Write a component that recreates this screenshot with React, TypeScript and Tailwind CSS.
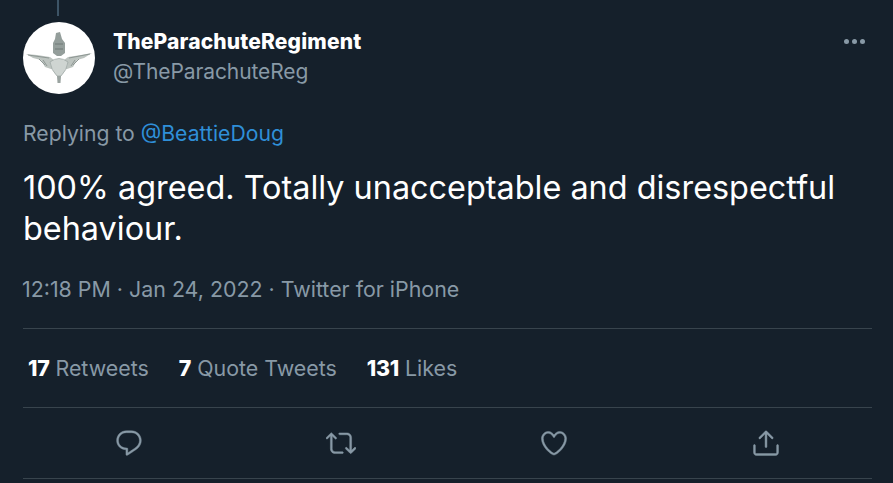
const F = "font-['Inter','Liberation_Sans',sans-serif]";

function Avatar() {
  return (
    <div className="w-[72px] h-[72px] rounded-full bg-white shrink-0 flex items-center justify-center">
      <svg width="72" height="72" viewBox="0 0 72 72" className="blur-[0.5px]">
        <path d="M3 32 L14 33 L27 35 L31 38 L41 38 L45 35 L58 33 L69 31 L61 36 L54 38 L50 45 L44 47 L28 47 L22 45 L18 38 L10 36 Z" fill="#bdc4c0" />
        <path d="M20 38 L24 44 M52 38 L48 44 M16 37 L22 43 M56 37 L50 43" stroke="#8f9895" strokeWidth="1" fill="none" />
        <path d="M27 40 Q36 33 45 40 Q44 48 38 54 L34 54 Q28 48 27 40 Z" fill="#cfd5d2" stroke="#9aa3a0" strokeWidth="0.7" />
        <path d="M34 54 L38 54 L37.5 61 L34.5 61 Z" fill="#9aa3a0" />
        <path d="M32 17 L33 11 L37 10 L39 17 L42 21 L42 31 L38 34 L34 34 L30 31 L30 21 Z" fill="#949e9b" />
        <path d="M32 22 L40 22 M32 27 L40 27" stroke="#6f7976" strokeWidth="1" />
        <path d="M5 33 L26 36 M67 32 L46 36" stroke="#78827f" strokeWidth="0.7" fill="none" />
      </svg>
    </div>
  );
}

function Ic({ children }: { children: React.ReactNode }) {
  return (
    <svg viewBox="0 0 24 24" className="w-[30px] h-[30px]" fill="#8899a6" stroke="#8899a6" strokeWidth="0.35">
      {children}
    </svg>
  );
}

export default function App() {
  return (
    <div className={`${F} w-[893px] h-[483px] bg-[#15202b] overflow-hidden px-[23px] flex flex-col`}>
      <div className="w-[2px] h-[16px] bg-[#3d5466] ml-[34px]" />
      <div className="flex items-start mt-[6px] h-[72px]">
        <Avatar />
        <div className="ml-[18px] flex-1 pt-[5px]">
          <div className="text-[21px] leading-[30px] font-extrabold text-white tracking-[0.15px]">TheParachuteRegiment</div>
          <div className="text-[21px] leading-[30px] text-[#8899a6] tracking-[-0.1px]">@TheParachuteReg</div>
        </div>
        <div className="flex gap-[3px] mt-[17px] mr-[5px]">
          <span className="w-[5px] h-[5px] rounded-full bg-[#8899a6]" />
          <span className="w-[5px] h-[5px] rounded-full bg-[#8899a6]" />
          <span className="w-[5px] h-[5px] rounded-full bg-[#8899a6]" />
        </div>
      </div>
      <div className="mt-[24px] text-[21.2px] leading-[30px] text-[#8899a6]">
        Replying to <span className="text-[#2f8fd8]">@BeattieDoug</span>
      </div>
      <div className="mt-[19px] text-[32.4px] leading-[41px] text-white w-[840px]">
        100% agreed. Totally unacceptable and disrespectful behaviour.
      </div>
      <div className="mt-[25px] -ml-[1px] text-[21.4px] leading-[30px] text-[#8899a6]">12:18 PM · Jan 24, 2022 · Twitter for iPhone</div>
      <div className="mt-[24px] border-t border-[#38444d] w-[849px] h-[79px] flex items-center pl-[5px] text-[21.4px] text-[#8899a6] gap-[30px]">
        <span><b className="text-white font-extrabold tracking-[-0.3px]">17</b> Retweets</span>
        <span><b className="text-white font-extrabold tracking-[-0.3px]">7</b> Quote Tweets</span>
        <span><b className="text-white font-extrabold tracking-[-0.3px]">131</b> Likes</span>
      </div>
      <div className="border-t border-b border-[#38444d] w-[849px] h-[72px] grid grid-cols-4 items-center">
        <div className="flex justify-center"><Ic><path d="M14.046 2.242l-4.148-.01h-.002c-4.374 0-7.8 3.427-7.8 7.802 0 4.098 3.186 7.206 7.465 7.37v3.828c0 .108.044.286.12.403.142.225.384.347.632.347.138 0 .277-.038.402-.118.264-.168 6.473-4.14 8.088-5.506 1.902-1.61 3.04-3.97 3.043-6.312v-.017c-.006-4.367-3.43-7.787-7.8-7.788zm3.787 12.972c-1.134.96-4.862 3.405-6.772 4.643V16.67c0-.414-.335-.75-.75-.75h-.396c-3.66 0-6.318-2.476-6.318-5.886 0-3.534 2.768-6.302 6.3-6.302l4.147.01h.002c3.532 0 6.3 2.766 6.302 6.296-.003 1.91-.942 3.844-2.514 5.176z" /></Ic></div>
        <div className="flex justify-center"><Ic><path d="M23.77 15.67c-.292-.293-.767-.293-1.06 0l-2.22 2.22V7.65c0-2.068-1.683-3.75-3.75-3.75h-5.85c-.414 0-.75.336-.75.75s.336.75.75.75h5.85c1.24 0 2.25 1.01 2.25 2.25v10.24l-2.22-2.22c-.293-.293-.768-.293-1.06 0s-.294.768 0 1.06l3.5 3.5c.145.147.337.22.53.22s.383-.072.53-.22l3.5-3.5c.294-.292.294-.767 0-1.06zm-10.66 3.28H7.26c-1.24 0-2.25-1.01-2.25-2.25V6.46l2.22 2.22c.148.147.34.22.532.22s.384-.073.53-.22c.293-.293.293-.768 0-1.06l-3.5-3.5c-.293-.294-.768-.294-1.06 0l-3.5 3.5c-.294.292-.294.767 0 1.06s.767.293 1.06 0l2.22-2.22V16.7c0 2.068 1.683 3.75 3.75 3.75h5.85c.414 0 .75-.336.75-.75s-.337-.75-.75-.75z" /></Ic></div>
        <div className="flex justify-center"><Ic><path d="M12 21.638h-.014C9.403 21.59 1.95 14.856 1.95 8.478c0-3.064 2.525-5.754 5.403-5.754 2.29 0 3.83 1.58 4.646 2.73.814-1.148 2.354-2.73 4.645-2.73 2.88 0 5.404 2.69 5.404 5.755 0 6.376-7.454 13.11-10.037 13.157H12zM7.354 4.225c-2.08 0-3.903 1.988-3.903 4.255 0 5.74 7.034 11.596 8.55 11.658 1.518-.062 8.55-5.917 8.55-11.658 0-2.267-1.823-4.255-3.903-4.255-2.528 0-3.94 2.936-3.952 2.965-.23.562-1.156.562-1.387 0-.014-.03-1.425-2.965-3.954-2.965z" /></Ic></div>
        <div className="flex justify-center"><Ic><path d="M17.53 7.47l-5-5c-.293-.293-.768-.293-1.06 0l-5 5c-.294.293-.294.768 0 1.06s.767.294 1.06 0l3.72-3.72V15c0 .414.336.75.75.75s.75-.336.75-.75V4.81l3.72 3.72c.146.147.338.22.53.22s.384-.072.53-.22c.293-.293.293-.767 0-1.06z" /><path d="M19.708 21.944H4.292C3.028 21.944 2 20.916 2 19.652V14c0-.414.336-.75.75-.75s.75.336.75.75v5.652c0 .437.355.792.792.792h15.416c.437 0 .792-.355.792-.792V14c0-.414.336-.75.75-.75s.75.336.75.75v5.652c0 1.264-1.028 2.292-2.292 2.292z" /></Ic></div>
      </div>
    </div>
  );
}
